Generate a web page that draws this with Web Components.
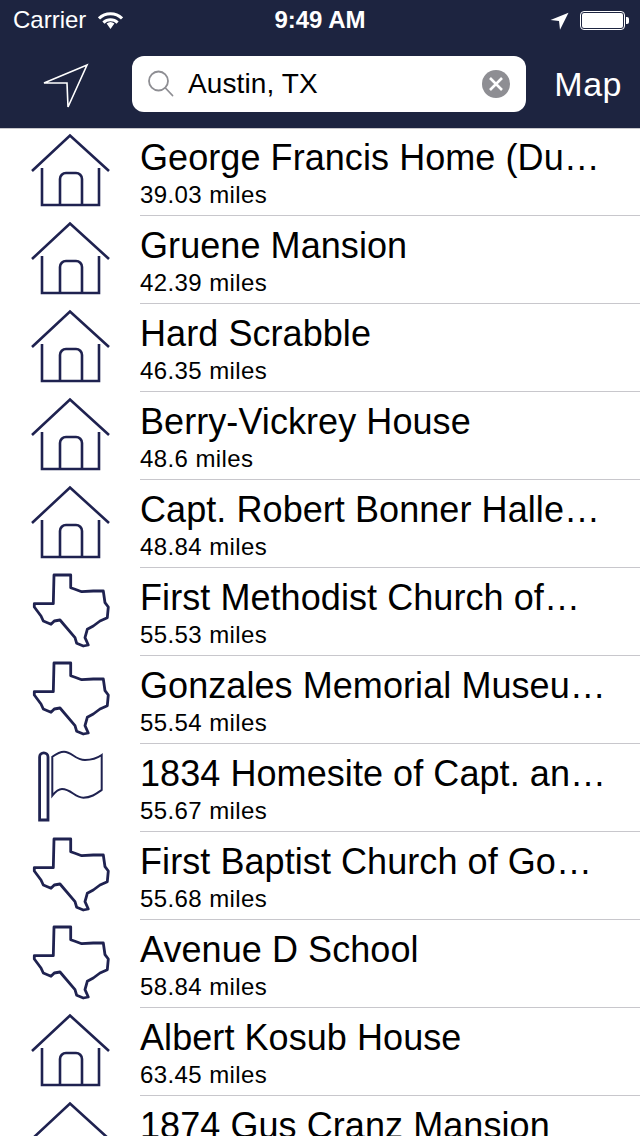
<!DOCTYPE html>
<html>
<head>
<meta charset="utf-8">
<style>
  html, body {
    margin: 0;
    height: 1136px;
    overflow: hidden;
    background: #fff;
    font-family: "Liberation Sans", Arial, sans-serif;
  }
</style>
</head>
<body>
<app-header>
  <status-bar carrier="Carrier" time="9:49 AM"></status-bar>
  <nav-bar>
    <search-field value="Austin, TX"></search-field>
  </nav-bar>
</app-header>
<place-list>
  <place-row icon="house" name="George Francis Home (Du…" miles="39.03 miles"></place-row>
  <place-row icon="house" name="Gruene Mansion" miles="42.39 miles"></place-row>
  <place-row icon="house" name="Hard Scrabble" miles="46.35 miles"></place-row>
  <place-row icon="house" name="Berry-Vickrey House" miles="48.6 miles"></place-row>
  <place-row icon="house" name="Capt. Robert Bonner Halle…" miles="48.84 miles"></place-row>
  <place-row icon="texas" name="First Methodist Church of…" miles="55.53 miles"></place-row>
  <place-row icon="texas" name="Gonzales Memorial Museu…" miles="55.54 miles"></place-row>
  <place-row icon="flag" name="1834 Homesite of Capt. an…" miles="55.67 miles"></place-row>
  <place-row icon="texas" name="First Baptist Church of Go…" miles="55.68 miles"></place-row>
  <place-row icon="texas" name="Avenue D School" miles="58.84 miles"></place-row>
  <place-row icon="house" name="Albert Kosub House" miles="63.45 miles"></place-row>
  <place-row icon="house" name="1874 Gus Cranz Mansion" miles=""></place-row>
</place-list>

<script>
const NAVY = "#1d2440";
const ICON_NAVY = "#1f2250";

class AppHeader extends HTMLElement {
  constructor() {
    super();
    this.attachShadow({ mode: "open" });
    this.shadowRoot.innerHTML = `
      <style>
        :host {
          display: block;
          height: 128px;
          background: ${NAVY};
          border-bottom: 1px solid #c8c7cc;
          color: #fff;
        }
      </style>
      <slot></slot>
    `;
  }
}

class StatusBar extends HTMLElement {
  constructor() {
    super();
    this.attachShadow({ mode: "open" });
  }

  connectedCallback() {
    this.shadowRoot.innerHTML = `
      <style>
        :host {
          display: grid;
          grid-template-columns: 1fr auto 1fr;
          align-items: center;
          height: 40px;
          padding: 0 11px;
          font-size: 24px;
        }
        .left, .right {
          display: flex;
          align-items: center;
        }
        .left { gap: 12px; padding-left: 2px; }
        .right { justify-content: flex-end; gap: 11px; }
        .time { font-weight: bold; }
        svg { display: block; }
      </style>
      <div class="left">
        <span>${this.getAttribute("carrier")}</span>
        <svg width="25" height="18" viewBox="0 0 25 18" fill="none" stroke="#fff" stroke-width="3">
          <path d="M1 7.4a16.4 16.4 0 0 1 23 0"/>
          <path d="M5.4 11.6a10.2 10.2 0 0 1 14.2 0"/>
          <path d="M8.6 12.6L12.5 18 16.4 12.6a6 6 0 0 0-7.8 0z" fill="#fff" stroke="none"/>
        </svg>
      </div>
      <div class="time">${this.getAttribute("time")}</div>
      <div class="right">
        <svg width="19" height="19" viewBox="0 0 19 19"><path d="M0.5 9L18.5 1.8 10 18.8 9 10z" fill="#fff"/></svg>
        <svg width="49" height="21" viewBox="0 0 49 21">
          <rect x="0.5" y="1.5" width="44" height="18" rx="3.5" fill="none" stroke="#fff"/>
          <rect x="2" y="3" width="41" height="15" rx="2" fill="#fff"/>
          <path d="M46 7h1a2 2 0 0 1 2 2v3a2 2 0 0 1-2 2h-1z" fill="#fff"/>
        </svg>
      </div>
    `;
  }
}

class NavBar extends HTMLElement {
  constructor() {
    super();
    this.attachShadow({ mode: "open" });
    this.shadowRoot.innerHTML = `
      <style>
        :host {
          display: flex;
          align-items: center;
          height: 88px;
          padding: 0 18px 0 0;
        }
        .locate {
          flex: 0 0 132px;
          display: flex;
          justify-content: center;
        }
        ::slotted(search-field) {
          flex: 0 0 394px;
        }
        .map {
          margin-left: auto;
          margin-top: 1px;
          font-size: 34px;
          letter-spacing: 0.5px;
        }
        svg { display: block; }
      </style>
      <div class="locate">
        <svg width="46" height="48" viewBox="0 0 46 48" fill="none" stroke="#fff" stroke-width="1.6">
          <path d="M1 23L44 5 25 47 24 23z"/>
        </svg>
      </div>
      <slot></slot>
      <div class="map">Map</div>
    `;
  }
}

class SearchField extends HTMLElement {
  constructor() {
    super();
    this.attachShadow({ mode: "open" });
  }

  connectedCallback() {
    this.shadowRoot.innerHTML = `
      <style>
        :host {
          display: flex;
          align-items: center;
          box-sizing: border-box;
          height: 56px;
          padding: 0 16px;
          background: #fff;
          border-radius: 12px;
          color: #000;
          font-size: 28px;
        }
        .value { margin-left: 13px; flex: 1; letter-spacing: 0.1px; }
        svg { display: block; }
      </style>
      <svg width="27" height="28" viewBox="0 0 27 28" fill="none" stroke="#8e8e93" stroke-width="1.8">
        <circle cx="10.5" cy="11" r="9.5"/>
        <path d="M17.4 18l7.1 7.5" stroke-linecap="round"/>
      </svg>
      <span class="value">${this.getAttribute("value")}</span>
      <svg width="28" height="28" viewBox="0 0 28 28">
        <circle cx="14" cy="14" r="14" fill="#8e8e93"/>
        <path d="M8 8l12 12M20 8L8 20" stroke="#fff" stroke-width="2.6" fill="none"/>
      </svg>
    `;
  }
}

class PlaceList extends HTMLElement {
  constructor() {
    super();
    this.attachShadow({ mode: "open" });
    this.shadowRoot.innerHTML = `
      <style>
        :host {
          display: block;
          margin-top: -1px;
        }
      </style>
      <slot></slot>
    `;
  }
}

// row icons, drawn in row coordinates (140 x 88)
const ROW_ICONS = {
  house: `
    <g fill="none" stroke="${ICON_NAVY}" stroke-width="2.6">
      <path d="M32 43L70 7.5 109 43"/>
      <path d="M42 40V77H99V40"/>
      <path d="M60 77V51a6 6 0 0 1 6-6H76a6 6 0 0 1 6 6V77"/>
    </g>`,
  texas: `
    <path fill="none" stroke="${ICON_NAVY}" stroke-width="2.8" stroke-linejoin="round"
      d="M54 7L70.7 7V19.7L75 21.3 81.7 23.7 93.3 23 103.3 23 105 34.7 108.3 39 107.3 49.7 100 53 93.3 58 87.3 61.3 85 69.7 88.3 77 83.3 78 76.7 75.3 75 69.7 60 52 54.3 53 51 56.3 43.3 53 41 48 34.3 39V35.7H53.3z"/>`,
  flag: `
    <path fill="none" stroke="${ICON_NAVY}" stroke-width="2.8" d="M39.6 76V13a4.2 4.2 0 0 1 8.4 0V76z"/>
    <path fill="none" stroke="${ICON_NAVY}" stroke-width="2"
      d="M52.3 12.7C58 8.6 61 7.7 64 7.7 72 7.7 75 16 85 16 91 16 96 15 101.7 11V46C96 50 91 53.7 83.3 53.7 75 53.7 71 45 62 45 59 45 56 47 52.3 51.7z"/>`,
};

class PlaceRow extends HTMLElement {
  constructor() {
    super();
    this.attachShadow({ mode: "open" });
  }

  connectedCallback() {
    this.shadowRoot.innerHTML = `
      <style>
        :host {
          display: flex;
          height: 88px;
          color: #000;
        }
        svg {
          display: block;
          flex: 0 0 140px;
        }
        .text {
          flex: 1;
          min-width: 0;
          box-sizing: border-box;
          padding-top: 8px;
          border-bottom: 1px solid #c8c7cc;
        }
        .name {
          font-size: 36px;
          line-height: 44px;
          letter-spacing: 0.07px;
          white-space: nowrap;
        }
        .miles {
          font-size: 24px;
          line-height: 29px;
          letter-spacing: 0.4px;
        }
      </style>
      <svg width="140" height="88" viewBox="0 0 140 88">${ROW_ICONS[this.getAttribute("icon")]}</svg>
      <div class="text">
        <div class="name">${this.getAttribute("name")}</div>
        <div class="miles">${this.getAttribute("miles")}</div>
      </div>
    `;
  }
}

customElements.define("app-header", AppHeader);
customElements.define("status-bar", StatusBar);
customElements.define("nav-bar", NavBar);
customElements.define("search-field", SearchField);
customElements.define("place-list", PlaceList);
customElements.define("place-row", PlaceRow);
</script>
</body>
</html>
